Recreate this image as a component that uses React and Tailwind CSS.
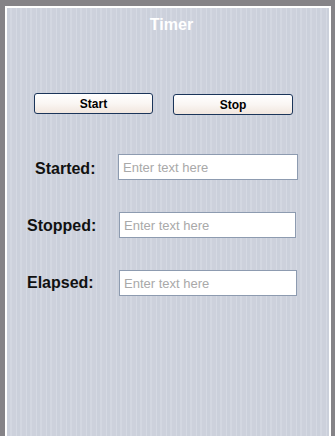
import React from "react";

const font = { fontFamily: '"Liberation Sans", Arial, sans-serif' };

function Row({ label, labelPl, labelPt, inputMl, inputW, mt }) {
  return (
    <div className={`flex items-start h-[26px] ${mt}`}>
      <div className={`w-[111px] shrink-0 ${labelPl} ${labelPt} text-[16px] leading-[20px] font-bold text-[#111]`}>
        {label}
      </div>
      <input
        type="text"
        placeholder="Enter text here"
        className={`${inputMl} ${inputW} h-[26px] bg-white border border-[#8d9bb0] px-[4px] text-[13px] text-[#333] placeholder:text-[#a9a9a9] outline-none`}
        style={font}
      />
    </div>
  );
}

export default function App() {
  return (
    <div className="w-[335px] h-[436px] bg-[#858387] pl-[5px] pt-[6px] pr-[4px] overflow-hidden" style={font}>
      <div className="h-full border-l-2 border-t-2 border-r-2 border-white bg-[#cdd1dc] bg-[repeating-linear-gradient(90deg,#cbd0db_0px,#cbd0db_3px,#d3d7e1_3px,#d3d7e1_5px,#cdd1dc_5px,#cdd1dc_9px,#d5d9e3_9px,#d5d9e3_10px)] flex flex-col">
        <div className="pt-[7px] pl-[7px] text-center text-white font-bold text-[16px] leading-[20px]">
          Timer
        </div>
        <div className="flex items-start mt-[58px] ml-[27px] gap-[20px]">
          <button className="w-[119px] h-[21px] rounded-[3px] border border-[#1b355a] bg-[linear-gradient(180deg,#ffffff_0%,#faf6f3_50%,#f1e6de_100%)] text-[12px] font-bold text-black leading-none">
            Start
          </button>
          <button className="mt-[1px] w-[120px] h-[21px] rounded-[3px] border border-[#1b355a] bg-[linear-gradient(180deg,#ffffff_0%,#faf6f3_50%,#f1e6de_100%)] text-[12px] font-bold text-black leading-none">
            Stop
          </button>
        </div>
        <Row label="Started:" labelPl="pl-[28px]" labelPt="pt-[5px]" inputMl="ml-0" inputW="w-[180px]" mt="mt-[39px]" />
        <Row label="Stopped:" labelPl="pl-[20px]" labelPt="pt-[4px]" inputMl="ml-[1px]" inputW="w-[177px]" mt="mt-[32px]" />
        <Row label="Elapsed:" labelPl="pl-[20px]" labelPt="pt-[3px]" inputMl="ml-[1px]" inputW="w-[178px]" mt="mt-[32px]" />
      </div>
    </div>
  );
}
